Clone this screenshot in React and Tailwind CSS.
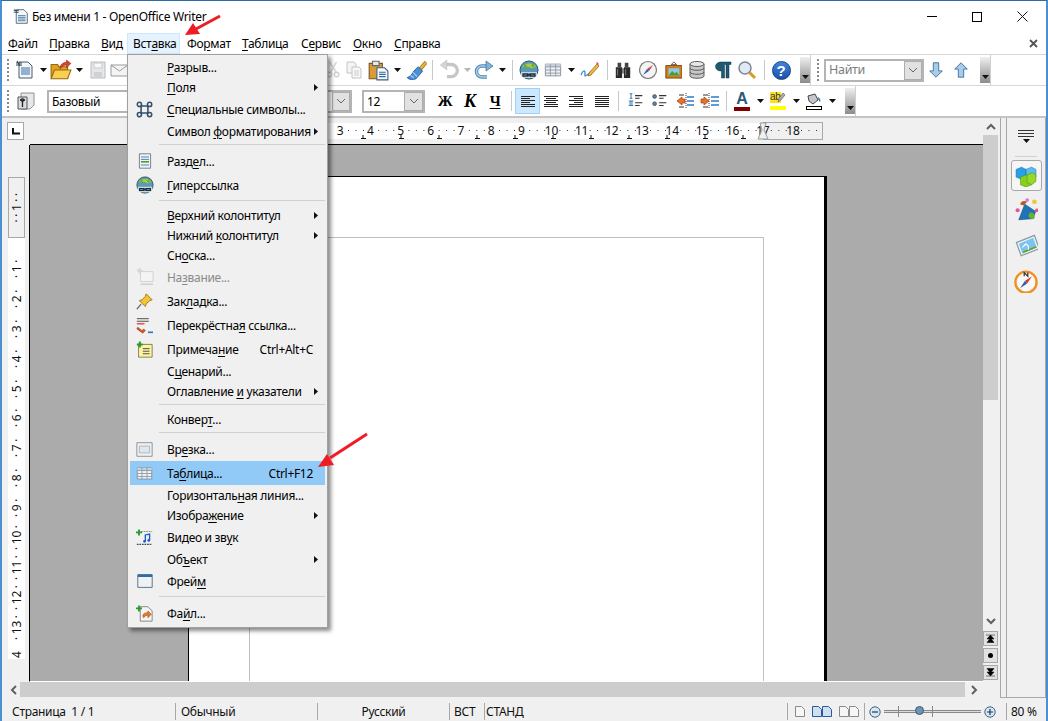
import React from 'react';

const MENU_ITEMS = [
  { label: '&Файл', cls: 'w-[41px]' },
  { label: '&Правка', cls: 'w-[52px]' },
  { label: '&Вид', cls: 'w-[26px]' },
  { label: 'Вст&авка', cls: 'w-[53px] pl-[5px] h-[21px] bg-[#e5f3ff] border border-[#cce8ff]' },
  { label: 'Фо&рмат', cls: 'w-[62px] pl-[7px]' },
  { label: '&Таблица', cls: 'w-[59px]' },
  { label: 'С&ервис', cls: 'w-[52px]' },
  { label: '&Окно', cls: 'w-[41px]' },
  { label: '&Справка', cls: 'w-[60px]' },
];

// ── Mnemonic text: "&" marks the underlined letter ──────────────
function Mn({ t }) {
  const i = t.indexOf('&');
  if (i < 0) return <>{t}</>;
  return (
    <>
      {t.slice(0, i)}
      <u className="underline underline-offset-2">{t[i + 1]}</u>
      {t.slice(i + 2)}
    </>
  );
}

function Ic({ s = 20, children, className = '' }) {
  return (
    <svg width={s} height={s} viewBox="0 0 20 20" className={className}>
      {children}
    </svg>
  );
}

const Caret = () => (
  <svg width="7" height="4" viewBox="0 0 7 4"><path d="M0 0h7L3.5 4z" fill="#111" /></svg>
);

function Slot({ className = '', children }) {
  return <div className={`flex h-full shrink-0 items-center justify-center ${className}`}>{children}</div>;
}

const Sep = ({ className = '' }) => (
  <Slot className={className}><div className="h-[20px] w-px bg-[#c8c8c8]" /></Slot>
);

const Handle = () => (
  <Slot className="w-[8px] flex-col gap-[2px]">
    {[0, 1, 2, 3, 4, 5].map((i) => <span key={i} className="h-[2px] w-[2px] bg-[#8a8a8a]" />)}
  </Slot>
);

const Drop = () => (
  <div className="flex h-[26px] w-[10px] shrink-0 items-end justify-center bg-gradient-to-b from-[#f0f0f0] to-[#8c8c8c] pb-[4px]">
    <Caret />
  </div>
);

function Combo({ className = '', text, muted, btn = 'w-[18px]' }) {
  return (
    <div className={`flex h-[23px] shrink-0 items-center justify-between border-2 border-[#b4b4b4] bg-white pl-[3px] ${className}`}>
      <span className={`mt-[1px] ${muted ? 'text-[#7d7d7d]' : 'text-black'}`}>{text}</span>
      <span className={`flex h-full items-center justify-center border border-[#adadad] bg-[#e1e1e1] ${btn}`}>
        <svg width="10" height="6" viewBox="0 0 10 6"><path d="M1 1l4 4 4-4" fill="none" stroke="#666" /></svg>
      </span>
    </div>
  );
}

// ── Toolbar icons ───────────────────────────────────────────────
const NewDoc = () => (
  <Ic s={20}>
    <path d="M4 2h9l4 4v12H4z" fill="#f4f6f8" stroke="#4a5a6a" />
    <path d="M1 3h6M1 5h6M2 1l3 5" stroke="#33475b" strokeWidth="1.2" />
    <path d="M6 8h9M6 10h9M6 12h9M6 14h9" stroke="#2e6da4" />
  </Ic>
);
const OpenFolder = () => (
  <Ic s={22}>
    <path d="M1 5h6l1 2h8v10H1z" fill="#e0a020" stroke="#9a6a10" />
    <path d="M1 18l3-8h15l-3 8z" fill="#f8cf50" stroke="#9a6a10" />
    <path d="M9 9c0-4 3-6 6-6V1l4 3-4 4V5.500c-2 0-4 1-6 3.500z" fill="#d8432a" stroke="#902818" strokeWidth=".5" />
  </Ic>
);
const Floppy = () => (
  <Ic>
    <path d="M3 2h14v16H3z" fill="#e4e6e8" stroke="#b8bcc0" />
    <path d="M6 3h8v5H6z" fill="#f8f8f8" stroke="#c8c8c8" />
    <path d="M6 12h8v6H6z" fill="#cfd2d5" />
  </Ic>
);
const Mail = () => (
  <Ic>
    <path d="M1 5h17v11H1z" fill="#f4f4f4" stroke="#999" />
    <path d="M1 5l8.500 6L18 5" fill="none" stroke="#999" />
  </Ic>
);
const Scissors = () => (
  <Ic>
    <path d="M14 1L7 13M6 1l8 12" stroke="#d4d4d4" strokeWidth="1.500" fill="none" />
    <circle cx="6" cy="15" r="2.500" fill="none" stroke="#d0d0d0" strokeWidth="1.500" />
    <circle cx="14" cy="15" r="2.500" fill="none" stroke="#d0d0d0" strokeWidth="1.500" />
  </Ic>
);
const CopyIc = () => (
  <Ic>
    <path d="M3 2h7l2 2v9H3z" fill="#f4f4f4" stroke="#c4c4c4" />
    <path d="M8 7h7l2 2v9H8z" fill="#f8f8f8" stroke="#c4c4c4" />
    <path d="M10 11h5M10 13h5M10 15h5" stroke="#cfcfcf" />
  </Ic>
);
const PasteIc = () => (
  <Ic s={22}>
    <path d="M2 4h12v14H2z" fill="#d99a3c" stroke="#7e561c" />
    <path d="M5 2h6v4H5z" fill="#e8e8e8" stroke="#666" />
    <path d="M9 8h7l3 3v8H9z" fill="#f6f8fb" stroke="#3f5f80" />
    <path d="M11 12h6M11 14h6M11 16h6" stroke="#2e6da4" />
  </Ic>
);
const Brush = () => (
  <Ic s={22}>
    <path d="M13 8l5-6 2 2-5 6z" fill="#e8b030" stroke="#8a6510" strokeWidth=".7" />
    <path d="M12 7l4 4-6 7c-3 1-6 1-8-1 3-1 5-4 6-6z" fill="#4a8fd8" stroke="#1f5a9a" strokeWidth=".8" />
    <path d="M7 12l4 4M5 15l3 2" stroke="#a8cff0" />
  </Ic>
);
const Undo = () => (
  <Ic s={22}>
    <path d="M8 5h5a5 5 0 010 11H9" fill="none" stroke="#c6c6c6" strokeWidth="3" />
    <path d="M9 1v9L3 5.500z" fill="#d4d4d4" stroke="#bbb" strokeWidth=".5" />
  </Ic>
);
const Redo = () => (
  <Ic s={22}>
    <path d="M13 6H8a5.500 5.500 0 000 11h5" fill="none" stroke="#4d84b0" strokeWidth="3.500" />
    <path d="M13 6H8a5.500 5.500 0 000 11h5" fill="none" stroke="#a8d0ec" strokeWidth="1.500" />
    <path d="M12 1v10l7-5z" fill="#7fb4da" stroke="#33678f" strokeWidth=".7" />
  </Ic>
);
const Globe = ({ s = 20 }) => (
  <Ic s={s}>
    <circle cx="10" cy="10" r="9" fill="#5b9bb8" stroke="#2b5468" />
    <path d="M3 7c3-4 10-5 14-1-1 2-3 2-5 2-2-2-6-1-9-1z" fill="#a4cf3c" />
    <path d="M5 3l3 3-3 3zM14 3l-2 3 4 2z" fill="#6fa82a" />
    <path d="M2 12h16v4l-3 2H5l-3-2z" fill="#c4d8e4" />
    <path d="M4 14h5v2H4zM11 14h5v2h-5zM8 15h4" fill="none" stroke="#1d2f3a" strokeWidth="1.300" />
  </Ic>
);
const TableIc = ({ s = 20 }) => (
  <Ic s={s}>
    <path d="M1.500 3.500h17v13h-17z" fill="#eef2f6" stroke="#7f8a96" />
    <path d="M1.500 3.500h17v3h-17z" fill="#c8d2dc" />
    <path d="M7 3.500v13M13 3.500v13M1.500 6.500h17M1.500 10h17M1.500 13.500h17" stroke="#8b96a2" fill="none" />
  </Ic>
);
const DrawIc = () => (
  <Ic>
    <path d="M1 15c2-5 4-5 4-2s-1 4 2 2 3-3 4-3" fill="none" stroke="#3a8ad8" strokeWidth="1.300" />
    <path d="M9 13l8-9 2 2-8 9-3 1z" fill="#f0b840" stroke="#8a5a10" strokeWidth=".7" />
    <path d="M16 3l1-1 2 2-1 1z" fill="#e05050" />
  </Ic>
);
const Binoculars = () => (
  <Ic s={22}>
    <path d="M4 2h4v5H4zM12 2h4v5h-4z" fill="#444" />
    <path d="M2 7h7v12H2zM11 7h7v12h-7z" fill="#2a2a2a" />
    <path d="M9 8h2v6H9z" fill="#777" />
    <path d="M4 9v7M13 9v7" stroke="#888" />
  </Ic>
);
const Navigator = ({ s = 20 }) => (
  <Ic s={s}>
    <circle cx="10" cy="10" r="8.500" fill="#f2f4f6" stroke="#777" strokeWidth="1.200" />
    <path d="M15 5l-4 6-2-2z" fill="#d83a2a" />
    <path d="M5 15l4-6 2 2z" fill="#3060b0" />
  </Ic>
);
const Gallery = () => (
  <Ic s={22}>
    <path d="M11 1l3 3H8z" fill="none" stroke="#744" />
    <path d="M2 5h18v14H2z" fill="#c87f20" stroke="#7e4a10" />
    <path d="M5 8h12v8H5z" fill="#8fc8e8" />
    <path d="M5 16l4-5 3 3 2-2 3 4z" fill="#4f9a2a" />
  </Ic>
);
const Database = () => (
  <Ic>
    <path d="M3 4v12c0 3 14 3 14 0V4z" fill="#c8c8c8" stroke="#5c5c5c" />
    <ellipse cx="10" cy="4" rx="7" ry="2.500" fill="#e8e8e8" stroke="#5c5c5c" />
    <path d="M3 8c0 3 14 3 14 0M3 12c0 3 14 3 14 0" fill="none" stroke="#5c5c5c" />
  </Ic>
);
const Pilcrow = () => (
  <Ic>
    <path d="M8 2h10v2.500h-2V18h-3V4.500h-1.500V18h-3v-7c-4 0-6-2-6-4.500S5 2 8 2z" fill="#1d5a72" stroke="#0c3244" strokeWidth=".5" />
  </Ic>
);
const Magnifier = () => (
  <Ic>
    <circle cx="8" cy="8" r="6" fill="#dfeaf4" stroke="#7a8894" strokeWidth="1.500" />
    <path d="M12.500 12.500L18 18" stroke="#d89a20" strokeWidth="3" />
  </Ic>
);
const Help = () => (
  <div className="flex h-[19px] w-[19px] items-center justify-center rounded-full border border-[#143f88] bg-gradient-to-b from-[#3f86dc] to-[#1c52a8] font-['Liberation_Sans',sans-serif] text-[15px] leading-none font-bold text-white">
    ?
  </div>
);
const BlueArrow = ({ up }) => (
  <Ic s={18} className={up ? '' : 'rotate-180'}>
    <path d="M10 2l7 7h-4v9H7V9H3z" fill="#a8cce8" stroke="#3a6e9a" />
  </Ic>
);
const StylesIc = () => (
  <Ic>
    <path d="M5 2h13v12l-4 4H5z" fill="#e8e8e8" stroke="#909090" />
    <path d="M2 6h9v12H2z" fill="#d8dde2" stroke="#555" />
    <path d="M4 9h5M6.500 9v7" stroke="#222" strokeWidth="1.300" />
    <circle cx="6.500" cy="9" r="1.500" fill="none" stroke="#222" />
  </Ic>
);
const Align = ({ rows }) => (
  <svg width="14" height="11" viewBox="0 0 14 11">
    {rows.map(([x, w], i) => <rect key={i} x={x} y={i * 2} width={w} height="1" fill="#222" />)}
  </svg>
);
const NumList = () => (
  <Ic s={18}>
    <path d="M3 2h3M4.500 2v5M3 7h3M2 10h5M2 15h5M3.500 10v5M5.500 10v5" stroke="#2e6da4" fill="none" />
    <path d="M9 4h8M9 7h5M9 12h8M9 15h5" stroke="#333" strokeWidth="1.200" />
  </Ic>
);
const BulList = () => (
  <Ic s={18}>
    <circle cx="4" cy="5" r="2.200" fill="#5e7f9e" stroke="#223" strokeWidth=".5" />
    <circle cx="4" cy="13" r="2.200" fill="#5e7f9e" stroke="#223" strokeWidth=".5" />
    <path d="M9 4h8M9 7h5M9 12h8M9 15h5" stroke="#333" strokeWidth="1.200" />
  </Ic>
);
const Indent = () => (
  <Ic>
    <path d="M11 2v16" stroke="#333" strokeDasharray="1 1" />
    <path d="M2 10l5-4v2h3v4H7v2z" fill="#e8722a" stroke="#a03c10" strokeWidth=".7" />
    <path d="M12 6h7M12 10h7M12 14h7" stroke="#2e7ac8" strokeWidth="1.500" />
    <path d="M4 4h5M4 16h5" stroke="#333" />
  </Ic>
);
const IndentR = () => (
  <Ic>
    <path d="M9 2v16" stroke="#333" strokeDasharray="1 1" />
    <path d="M9 10L4 6v2H1v4h3v2z" fill="#e8722a" stroke="#a03c10" strokeWidth=".7" />
    <path d="M11 6h8M11 10h8M11 14h8" stroke="#2e7ac8" strokeWidth="1.500" />
    <path d="M3 4h5M3 16h5" stroke="#333" />
  </Ic>
);
const FontColor = () => (
  <div className="flex w-[16px] flex-col items-center">
    <span className="font-['Liberation_Sans',sans-serif] text-[16px] leading-[15px] font-bold text-[#2c5878]">A</span>
    <span className="mt-[1px] h-[4px] w-[16px] bg-[#800000]" />
  </div>
);
const Highlight = () => (
  <div className="relative flex w-[16px] flex-col">
    <span className="h-[11px] w-[11px] bg-[#ffe020] font-['Liberation_Sans',sans-serif] text-[10px] leading-[10px] text-[#333]">ab</span>
    <svg width="9" height="11" viewBox="0 0 9 11" className="absolute top-0 right-0"><path d="M1 10l1-4 4-5 2 2-4 5z" fill="#aaa" stroke="#555" strokeWidth=".6" /></svg>
    <span className="mt-[3px] h-[4px] w-[16px] bg-[#ffff00]" />
  </div>
);
const BgColor = () => (
  <div className="flex w-[16px] flex-col items-center">
    <svg width="16" height="12" viewBox="0 0 16 12">
      <path d="M2 3l7-2 3 6-5 4-4-3z" fill="#c4c8cc" stroke="#444" />
      <path d="M12 4c2 1 3 3 2 5-1-1-2-2-2-5z" fill="#2e7ac8" />
    </svg>
    <span className="mt-[1px] h-[4px] w-[16px] border border-black bg-white" />
  </div>
);

// ── Insert menu icons ───────────────────────────────────────────
const SymbolsIc = () => (
  <Ic s={17}>
    <path d="M6 6h8v8H6z" fill="none" stroke="#304f6c" strokeWidth="1.800" />
    <circle cx="4" cy="4" r="2.500" fill="none" stroke="#304f6c" strokeWidth="1.800" />
    <circle cx="16" cy="4" r="2.500" fill="none" stroke="#304f6c" strokeWidth="1.800" />
    <circle cx="4" cy="16" r="2.500" fill="none" stroke="#304f6c" strokeWidth="1.800" />
    <circle cx="16" cy="16" r="2.500" fill="none" stroke="#304f6c" strokeWidth="1.800" />
  </Ic>
);
const SectionIc = () => (
  <Ic s={16}>
    <path d="M3 1h14v18H3z" fill="#eef2f6" stroke="#5a6a78" />
    <path d="M5 5h10M5 8h10" stroke="#2e6da4" />
    <path d="M5 11h10" stroke="#4aa02a" strokeWidth="2" />
    <path d="M5 15h10" stroke="#2e6da4" />
  </Ic>
);
const CaptionIc = () => (
  <Ic s={18}>
    <path d="M5 4h14v11H5z" fill="#f4f4f4" stroke="#d0d0d0" />
    <path d="M1 3h6M4 0v6" stroke="#cfd8cc" strokeWidth="2" />
    <path d="M5 18h14" stroke="#d4d4d4" strokeWidth="2" />
  </Ic>
);
const PinIc = () => (
  <Ic s={17}>
    <path d="M12 1l7 7-3 1-4 4-1 3-7-7 3-1 4-4z" fill="#f2c430" stroke="#9a6a10" />
    <path d="M6 13l-5 6" stroke="#666" strokeWidth="1.500" />
  </Ic>
);
const CrossRefIc = () => (
  <Ic s={17}>
    <path d="M1 2h14M1 5h14" stroke="#333" />
    <path d="M1 8h9" stroke="#d83a2a" strokeWidth="1.500" />
    <path d="M2 12l5 4 2-2 2 2-3 3-7-5z" fill="#d85a2a" stroke="#8a2a10" strokeWidth=".6" />
    <path d="M14 18h6" stroke="#2e7ac8" strokeWidth="2" />
  </Ic>
);
const NoteIc = () => (
  <Ic s={17}>
    <path d="M3 4h16v15H3z" fill="#fdf3a8" stroke="#7a7430" />
    <path d="M8 9h8M8 12h8M8 15h8" stroke="#333" />
    <path d="M1 4h7M4.500 .5v7" stroke="#2a9a2a" strokeWidth="2.400" />
  </Ic>
);
const FrameBoxIc = () => (
  <Ic s={17}>
    <path d="M1 2h18v16H1z" fill="#f0f0f0" stroke="#808890" />
    <path d="M4 6h12v8H4z" fill="#dfe6ec" stroke="#a8b0b8" />
  </Ic>
);
const VideoIc = () => (
  <Ic s={17}>
    <path d="M1 18h18" stroke="#444" strokeDasharray="2 1" strokeWidth="1.500" />
    <path d="M6 3h13" stroke="#777" strokeDasharray="2 1" />
    <path d="M11 14V7l5-1v7" fill="none" stroke="#1a5ac8" strokeWidth="1.600" />
    <circle cx="10" cy="14.500" r="1.600" fill="#1a5ac8" />
    <circle cx="15" cy="13.500" r="1.600" fill="#1a5ac8" />
    <path d="M0 4h7M3.500 .5v7" stroke="#2a9a2a" strokeWidth="2.200" />
  </Ic>
);
const WindowIc = () => (
  <Ic s={16}>
    <path d="M1 2h18v16H1z" fill="#eef2f6" stroke="#44586a" />
    <path d="M1 2h18v3H1z" fill="#2e6da4" />
  </Ic>
);
const FileIc = () => (
  <Ic s={17}>
    <path d="M5 2h9l5 5v12H5z" fill="#f4f4f4" stroke="#777" />
    <path d="M8 13c0-3 3-4 6-4V7l4 4-4 4v-3c-2 0-4 1-5 3z" fill="#e87a2a" stroke="#9a3c10" strokeWidth=".6" />
    <path d="M0 4h7M3.500 .5v7" stroke="#2a9a2a" strokeWidth="2.200" />
  </Ic>
);

const INSERT_MENU = [
  { t: '&Разрыв...' },
  { t: '&Поля', sub: true },
  { t: '&Специальные символы...', icon: <SymbolsIc />, tall: true },
  { t: 'Символ &форматирования', sub: true },
  { sep: true },
  { t: 'Разд&ел...', icon: <SectionIc />, tall: true },
  { t: '&Гиперссылка', icon: <Globe s={18} />, tall: true },
  { sep: true },
  { t: '&Верхний колонтитул', sub: true },
  { t: 'Нижний &колонтитул', sub: true },
  { t: 'Сн&оска...' },
  { t: 'На&звание...', icon: <CaptionIc />, tall: true, off: true },
  { t: 'Зак&ладка...', icon: <PinIc />, tall: true },
  { t: 'Перекрёстна&я ссылка...', icon: <CrossRefIc />, tall: true },
  { t: 'Примеча&ние', key: 'Ctrl+Alt+C', icon: <NoteIc />, tall: true },
  { t: 'С&ценарий...' },
  { t: 'Оглавление &и указатели', sub: true },
  { sep: true },
  { t: 'Конвер&т...' },
  { sep: true },
  { t: 'Вр&езка...', icon: <FrameBoxIc />, tall: true },
  { t: 'Та&блица...', key: 'Ctrl+F12', icon: <TableIc s={17} />, tall: true, active: true },
  { t: 'Горизонталь&ная линия...' },
  { t: 'Изобра&жение', sub: true },
  { t: 'Видео и зв&ук', icon: <VideoIc />, tall: true },
  { t: 'Об&ъект', sub: true },
  { t: 'Фрей&м', icon: <WindowIc />, tall: true },
  { sep: true },
  { t: 'Фа&йл...', icon: <FileIc />, tall: true },
];

function InsertMenu() {
  return (
    <div className="absolute top-[53px] left-[125px] flex h-[574px] w-[201px] flex-col border border-[#a0a0a0] bg-[#f0f0f0] py-[2px] pr-[2px] pl-[2px] shadow-[3px_3px_4px_rgba(0,0,0,0.45)]">
      {INSERT_MENU.map((m, i) =>
        m.sep ? (
          <div key={i} className="flex h-[8px] shrink-0 items-start pt-[3px] pl-[29px]">
            <div className="h-px w-full bg-[#d0d0d0]" />
          </div>
        ) : (
          <div
            key={i}
            className={`flex shrink-0 items-center ${m.tall ? 'h-[24px]' : 'h-[20px]'} ${m.active ? 'bg-[#91c9f7]' : ''} ${m.off ? 'text-[#8a8a8a]' : 'text-black'}`}
          >
            <span className="flex w-[29px] shrink-0 items-center justify-center">{m.icon}</span>
            <span className="mt-[2px] ml-[8px] whitespace-nowrap"><Mn t={m.t} /></span>
            {m.key && <span className="mt-[2px] mr-[12px] ml-auto whitespace-nowrap">{m.key}</span>}
            {m.sub && (
              <svg width="4" height="7" viewBox="0 0 4 7" className="mr-[7px] ml-auto"><path d="M0 0l4 3.500L0 7z" fill="#111" /></svg>
            )}
          </div>
        ),
      )}
    </div>
  );
}

const RULER_H = [3, 4, 5, 6, 7, 8, 9, 10, 11, 12, 13, 14, 15, 16, 17, 18];
const RULER_V = [1, 2, 3, 4, 5, 6, 7, 8, 9, 10, 11, 12, 13];

function HRuler() {
  return (
    <div className="relative flex h-[27px] min-w-0 flex-1 border-b border-black">
      <div className="w-[219px] shrink-0" />
      <div className="mt-[5px] h-[16px] w-[514px] shrink-0 bg-white" />
      <div className="mt-[4px] h-[18px] w-[60px] shrink-0 border border-[#a8a8a8]" />
      {/* numbers and tab stops sit over the white and grey bands */}
      <div className="absolute top-[4px] left-[295px] flex h-[18px] items-center text-[12px] text-[#111]">
        {RULER_H.map((n) => (
          <span key={n} className="flex w-[30.2px] shrink-0 justify-center">{n}</span>
        ))}
      </div>
      <svg width="500" height="27" className="absolute top-0 left-[297px]">
        {RULER_H.flatMap((n, i) => [8, 15.500, 23].map((d) => (
          <rect key={`${n}-${d}`} x={i * 30.2 + 13 + d} y="12" width="1" height="1" fill="#333" />
        )))}
        {[36, 74, 112, 150, 188, 226, 264, 302, 340, 378, 416].map((x) => (
          <path key={x} d={`M${x - 2} 20.500h5M${x} 17v4`} stroke="#111" fill="none" />
        ))}
      </svg>
      <svg width="12" height="20" viewBox="0 0 12 20" className="absolute top-[4px] left-[727px]">
        <path d="M3 1h6L7 8l4 9H1l4-9z" fill="#f0f0f0" stroke="#999" />
      </svg>
    </div>
  );
}

function VRuler() {
  return (
    <div className="ml-[6px] flex h-full w-[17px] shrink-0 flex-col items-stretch text-[12px] text-[#111]">
      <div className="h-[32px] shrink-0" />
      <div className="flex h-[61px] shrink-0 items-center justify-center border border-[#a8a8a8]">
        <span className="rotate-180 [writing-mode:vertical-rl]">· · 1 · ·</span>
      </div>
      <div className="flex h-[421px] shrink-0 flex-col overflow-hidden bg-white pt-[16px]">
        {RULER_V.map((n) => (
          <span key={n} className="flex h-[29.9px] w-full shrink-0 items-center justify-center rotate-180 whitespace-nowrap [writing-mode:vertical-rl]">
            · {n} ·
          </span>
        ))}
        <span className="flex h-[16px] w-full shrink-0 items-center justify-center rotate-180 pb-[8px] [writing-mode:vertical-rl]">4</span>
      </div>
    </div>
  );
}

const Chevron = ({ d }) => (
  <svg width="10" height="10" viewBox="0 0 10 10"><path d={d} fill="none" stroke="#606060" strokeWidth="2" /></svg>
);

const NavBtn = ({ children }) => (
  <div className="mb-[2px] flex h-[15px] w-[15px] items-center justify-center border border-[#a8a8a8] bg-[#e1e1e1]">{children}</div>
);

const PageIc = ({ on, wide }) => (
  <svg width={wide ? 20 : 10} height="11" viewBox={wide ? '0 0 20 11' : '0 0 10 11'}>
    <path d="M.5.5h6l3 3v7h-9z" fill={on ? '#cfe0f4' : '#f6f6f6'} stroke={on ? '#2a5a98' : '#8a8a8a'} />
    {wide && <path d="M10.500.5h6l3 3v7h-9z" fill={on ? '#cfe0f4' : '#f6f6f6'} stroke={on ? '#2a5a98' : '#8a8a8a'} />}
  </svg>
);

const Round = ({ plus }) => (
  <svg width="12" height="12" viewBox="0 0 12 12">
    <circle cx="6" cy="6" r="5.200" fill="#d8e6f2" stroke="#3c6488" />
    <path d={plus ? 'M3 6h6M6 3v6' : 'M3 6h6'} stroke="#1c3c5c" strokeWidth="1.200" />
  </svg>
);

export default function App() {
  return (
    <div className="relative flex h-[721px] w-[1048px] flex-col overflow-hidden border-t border-r-2 border-l-2 border-t-[#2a6cb0] border-r-[#4a90d0] border-l-[#4a90d0] bg-[#f0f0f0] font-['Noto_Sans',sans-serif] text-[12px] leading-none tracking-[-0.3px] text-black">
      {/* ── Title bar ── */}
      <div className="flex h-[29px] shrink-0 items-center bg-white pt-[2px] pl-[10px]">
        <Ic s={17}><path d="M5 2h9l4 4v12H5z" fill="#f4f6f8" stroke="#4a5a6a" /><path d="M2 3h6M2 5h6M3 1l3 5" stroke="#33475b" /><path d="M7 9h9M7 11h9M7 13h9M7 15h9" stroke="#2e6da4" /></Ic>
        <span className="mt-[1px] ml-[3px]">Без имени 1 - OpenOffice Writer</span>
        <div className="ml-auto flex items-center">
          <div className="mr-[35px] h-px w-[10px] bg-black" />
          <div className="mr-[35px] h-[10px] w-[10px] border border-black" />
          <svg width="11" height="11" viewBox="0 0 11 11" className="mr-[18px]"><path d="M.5.5l10 10M10.500.5l-10 10" stroke="#111" /></svg>
        </div>
      </div>

      {/* ── Menu bar ── */}
      <div className="flex h-[25px] shrink-0 items-center border-b border-[#d8d8d8] bg-white pt-[3px] pl-[6px]">
        {MENU_ITEMS.map((m) => (
          <span key={m.label} className={`flex shrink-0 items-center ${m.cls}`}><span><Mn t={m.label} /></span></span>
        ))}
        <svg width="9" height="9" viewBox="0 0 9 9" className="mr-[8px] ml-auto"><path d="M1 1l7 7M8 1L1 8" stroke="#555" strokeWidth="1.800" /></svg>
      </div>

      {/* ── Standard toolbar ── */}
      <div className="flex h-[31px] shrink-0 items-center border-b border-[#d8d8d8] bg-white">
        <Slot className="w-[12px] justify-center"><Handle /></Slot>
        <Slot className="w-[22px]"><NewDoc /></Slot>
        <Slot className="w-[14px]"><Caret /></Slot>
        <Slot className="w-[22px]"><OpenFolder /></Slot>
        <Slot className="w-[14px]"><Caret /></Slot>
        <Slot className="w-[24px]"><Floppy /></Slot>
        <Slot className="w-[20px]"><Mail /></Slot>
        <div className="w-[194px] shrink-0" />
        <Slot className="w-[18px]"><Scissors /></Slot>
        <Slot className="w-[24px]"><CopyIc /></Slot>
        <Slot className="w-[24px]"><PasteIc /></Slot>
        <Slot className="w-[14px]"><Caret /></Slot>
        <Slot className="w-[24px]"><Brush /></Slot>
        <Sep className="w-[8px]" />
        <Slot className="w-[24px]"><Undo /></Slot>
        <Slot className="w-[14px] opacity-30"><Caret /></Slot>
        <Slot className="w-[20px]"><Redo /></Slot>
        <Slot className="w-[16px]"><Caret /></Slot>
        <Sep className="w-[4px]" />
        <Slot className="w-[30px]"><Globe /></Slot>
        <Slot className="w-[18px]"><TableIc /></Slot>
        <Slot className="w-[18px]"><Caret /></Slot>
        <Slot className="w-[20px]"><DrawIc /></Slot>
        <Sep className="w-[14px]" />
        <Slot className="w-[18px]"><Binoculars /></Slot>
        <Slot className="w-[32px]"><Navigator /></Slot>
        <Slot className="w-[18px]"><Gallery /></Slot>
        <Slot className="w-[30px]"><Database /></Slot>
        <Slot className="w-[22px]"><Pilcrow /></Slot>
        <Slot className="w-[26px]"><Magnifier /></Slot>
        <Sep className="w-[8px]" />
        <Slot className="w-[26px]"><Help /></Slot>
        <div className="w-[6px] shrink-0" />
        <Drop />
        <div className="flex h-full w-[14px] shrink-0 items-center justify-center border-l border-[#d0d0d0]"><Handle /></div>
        <Combo className="w-[100px] text-[12.500px]" text="Найти" muted btn="w-[18px]" />
        <Slot className="w-[24px]"><BlueArrow /></Slot>
        <Slot className="w-[26px]"><BlueArrow up /></Slot>
        <div className="w-[6px] shrink-0" />
        <Drop />
        <div className="h-full w-px shrink-0 border-l border-[#d0d0d0]" />
      </div>

      {/* ── Formatting toolbar ── */}
      <div className="flex h-[32px] shrink-0 items-center border-b-2 border-[#c4c4c4] bg-white">
        <Slot className="w-[12px] justify-center"><Handle /></Slot>
        <Slot className="w-[24px]"><StylesIc /></Slot>
        <div className="w-[9px] shrink-0" />
        <Combo className="w-[305px]" text="Базовый" />
        <div className="w-[10px] shrink-0" />
        <Combo className="w-[63px]" text="12" btn="w-[19px]" />
        <div className="w-[8px] shrink-0" />
        <Slot className="w-[24px] font-['Liberation_Serif',serif] text-[15px] font-bold">Ж</Slot>
        <Slot className="w-[26px] font-['Liberation_Serif',serif] text-[18px] font-bold italic">К</Slot>
        <Slot className="w-[24px] font-['Liberation_Serif',serif] text-[15px] font-bold underline underline-offset-2">Ч</Slot>
        <Sep className="w-[8px]" />
        <div className="flex h-[26px] w-[25px] shrink-0 items-center justify-center border border-[#99d1ff] bg-[#cce8ff]"><Align rows={[[0, 14], [0, 9], [0, 14], [0, 9], [0, 14], [0, 14]]} /></div>
        <Slot className="w-[22px]"><Align rows={[[0, 14], [2, 10], [0, 14], [2, 10], [0, 14], [0, 14]]} /></Slot>
        <Slot className="w-[28px]"><Align rows={[[0, 14], [5, 9], [0, 14], [5, 9], [0, 14], [0, 14]]} /></Slot>
        <Slot className="w-[24px]"><Align rows={[[0, 14], [0, 14], [0, 14], [0, 14], [0, 14], [0, 14]]} /></Slot>
        <Sep className="w-[8px]" />
        <Slot className="w-[28px]"><NumList /></Slot>
        <Slot className="w-[20px]"><BulList /></Slot>
        <Slot className="w-[30px]"><Indent /></Slot>
        <Slot className="w-[20px]"><IndentR /></Slot>
        <Sep className="w-[12px]" />
        <Slot className="w-[20px]"><FontColor /></Slot>
        <Slot className="w-[16px]"><Caret /></Slot>
        <Slot className="w-[20px]"><Highlight /></Slot>
        <Slot className="w-[16px]"><Caret /></Slot>
        <Slot className="w-[20px]"><BgColor /></Slot>
        <Slot className="w-[16px]"><Caret /></Slot>
        <div className="w-[5px] shrink-0" />
        <Drop />
        <div className="h-full w-px shrink-0 border-l border-[#d0d0d0]" />
      </div>

      {/* ── Workspace ── */}
      <div className="flex min-h-0 flex-1">
        <div className="flex w-[981px] shrink-0 flex-col">
          <div className="flex h-[27px] shrink-0">
            <div className="mt-[4px] ml-[5px] flex h-[18px] w-[17px] shrink-0 items-center justify-center border border-[#a8a8a8] bg-white">
              <svg width="8" height="7" viewBox="0 0 8 7"><path d="M1 0v5.500h7" fill="none" stroke="#111" strokeWidth="2" /></svg>
            </div>
            <div className="w-[6px] shrink-0" />
            <HRuler />
          </div>
          <div className="flex h-[537px] shrink-0">
            <VRuler />
            <div className="w-[4px] shrink-0" />
            <div className="min-w-0 flex-1 overflow-hidden border-b border-l border-b-white border-l-black bg-[#ababab] pt-[31px] pl-[158px]">
              <div className="h-[600px] w-[639px] border-t border-r-[3px] border-l border-black bg-white pt-[60px] pl-[60px]">
                <div className="h-full w-[515px] border-x border-t border-[#c0c0c0]" />
              </div>
            </div>
          </div>
          <div className="flex h-[15px] shrink-0 items-center pl-[5px]">
            <span className="flex w-[13px] shrink-0 justify-center"><Chevron d="M7 1L3 5l4 4" /></span>
            <div className="h-full w-[945px] shrink-0 bg-[#cdcdcd]" />
            <span className="flex w-[18px] shrink-0 justify-center"><Chevron d="M3 1l4 4-4 4" /></span>
          </div>
        </div>

        <div className="flex w-[15px] shrink-0 flex-col">
          <div className="flex h-[17px] shrink-0 items-center justify-center"><Chevron d="M1 7l4-4 4 4" /></div>
          <div className="h-[265px] shrink-0 bg-[#cdcdcd]" />
          <div className="flex-1" />
          <div className="flex h-[12px] shrink-0 items-center justify-center"><Chevron d="M1 3l4 4 4-4" /></div>
          <div className="h-[55px] shrink-0 pt-[4px]">
            <NavBtn><svg width="9" height="9" viewBox="0 0 9 9"><path d="M0 1h9M4.500 1L8 5H1zM4.500 4L8 8.500H1z" fill="#000" stroke="#000" strokeWidth=".5" /></svg></NavBtn>
            <NavBtn><span className="h-[5px] w-[5px] rounded-full bg-black" /></NavBtn>
            <NavBtn><svg width="9" height="9" viewBox="0 0 9 9"><path d="M0 8h9M4.500 8L8 4H1zM4.500 5L8 .5H1z" fill="#000" stroke="#000" strokeWidth=".5" /></svg></NavBtn>
          </div>
          <div className="h-[16px] shrink-0" />
        </div>

        {/* ── Sidebar ── */}
        <div className="ml-[2px] flex h-[580px] w-[6px] shrink-0 border-b border-l border-[#a8a8a8]" />
        <div className="flex h-[580px] min-w-0 flex-1 flex-col items-center border-x border-b border-[#a8a8a8]">
          <div className="mt-[12px] flex h-[17px] w-[16px] flex-col items-center gap-[2px]">
            <span className="h-px w-[16px] bg-[#333]" />
            <span className="h-px w-[16px] bg-[#333]" />
            <span className="h-px w-[16px] bg-[#333]" />
            <Caret />
          </div>
          <div className="mt-[9px] h-px w-[22px] bg-[#d0d0d0]" />
          <div className="mt-[3px] flex h-[31px] w-[31px] items-center justify-center rounded-[3px] border border-[#a8a8a8] bg-[#f6f6f6]">
            <Ic s={22}>
              <path d="M1 4l5-2 4 2v7l-4 2-5-2z" fill="#28a0e8" stroke="#0c6cb0" strokeWidth=".5" />
              <path d="M10 4l5-2 4 2v7l-4 2-5-2z" fill="#58c0e8" stroke="#0c6cb0" strokeWidth=".5" />
              <path d="M5 11l5-2 5 2v7l-5 2-5-2z" fill="#88d020" stroke="#4c9010" strokeWidth=".5" />
              <path d="M11 9l5-2 3 2v6l-4 3-4-2z" fill="#98d828" stroke="#4c9010" strokeWidth=".5" />
            </Ic>
          </div>
          <div className="mt-[6px]">
            <Ic s={24}>
              <path d="M9 6l9 6-2 6-12 1z" fill="#1f74b8" stroke="#0c4c80" strokeWidth=".5" />
              <path d="M13 13c3 0 5 1 4 5-3 1-4-1-5-2z" fill="#70b030" />
              <path d="M5 6c1-3 4-3 6-2L8 7z" fill="#b85a20" />
              <circle cx="3" cy="11" r="1.700" fill="#e850a8" /><circle cx="11" cy="2.500" r="1.500" fill="#d870e0" />
              <circle cx="17" cy="4" r="2" fill="#f0c838" /><circle cx="19" cy="11" r="1.500" fill="#e85088" />
            </Ic>
          </div>
          <div className="mt-[12px]">
            <Ic s={24}>
              <path d="M2 8L17 2l4 11-15 6z" fill="#f0f6f8" stroke="#8898a0" />
              <path d="M4 9l12-5 3 8-12 5z" fill="#7cc4f0" />
              <path d="M8 15l10-4 1 1-12 5z" fill="#6aa030" />
              <path d="M7 12l3-3 2 2v3" fill="none" stroke="#fff" />
            </Ic>
          </div>
          <div className="mt-[12px]">
            <Ic s={24}>
              <circle cx="10" cy="11" r="8.800" fill="#f8f8f8" stroke="#f09020" strokeWidth="2" />
              <path d="M15 6l-4 6-2-2z" fill="#d83a2a" />
              <path d="M5 16l4-6 2 2z" fill="#3060b0" />
              <path d="M8.500 6V3l3 3V3" fill="none" stroke="#333" />
            </Ic>
          </div>
        </div>
      </div>

      {/* ── Status bar ── */}
      <div className="flex h-[23px] shrink-0 items-center pt-[4px] text-[#111]">
        <span className="flex h-[17px] w-[173px] shrink-0 items-center pl-[10px] whitespace-pre">Страница  1 / 1</span>
        <span className="flex h-[17px] w-[142px] shrink-0 items-center border-l border-[#a8a8a8] pl-[5px]">Обычный</span>
        <span className="flex h-[17px] w-[132px] shrink-0 items-center justify-center border-l border-[#a8a8a8]">Русский</span>
        <span className="flex h-[17px] w-[35px] shrink-0 items-center border-l border-[#a8a8a8] pl-[4px]">ВСТ</span>
        <span className="flex h-[17px] w-[303px] shrink-0 items-center border-l border-[#a8a8a8] pl-px">СТАНД</span>
        <span className="flex h-[17px] w-[77px] shrink-0 items-center gap-[7px] border-l border-[#a8a8a8] pl-[7px]">
          <PageIc />
          <PageIc on wide />
          <PageIc wide />
        </span>
        <span className="flex h-[17px] w-[142px] shrink-0 items-center border-l border-[#a8a8a8] pl-[4px]">
          <Round />
          <span className="relative mx-[3px] h-[3px] w-[97px] border-y border-[#888] bg-[#dcdcdc]">
            <span className="absolute top-[-5px] left-[14px] h-[11px] w-px bg-[#888]" />
            <span className="absolute top-[-5px] left-[48px] h-[11px] w-px bg-[#888]" />
            <span className="absolute top-[-5px] left-[31px] h-[9px] w-[9px] rounded-full border border-[#3c5c78] bg-[#6c94b4]" />
          </span>
          <Round plus />
        </span>
        <span className="flex h-[17px] min-w-0 flex-1 items-center border-l border-[#a8a8a8] pl-[4px]">80 %</span>
      </div>

      <InsertMenu />

      {/* red annotation arrows over the screenshot */}
      <svg width="1048" height="721" className="pointer-events-none absolute top-[-1px] left-[-2px]">
        <path d="M220 16L196 29" stroke="#ee1c25" strokeWidth="3" />
        <path d="M185 35l8-12 7 11z" fill="#ee1c25" />
        <path d="M367 434L330 458" stroke="#ee1c25" strokeWidth="3" />
        <path d="M318 467l9-13 7 11z" fill="#ee1c25" />
      </svg>
    </div>
  );
}
